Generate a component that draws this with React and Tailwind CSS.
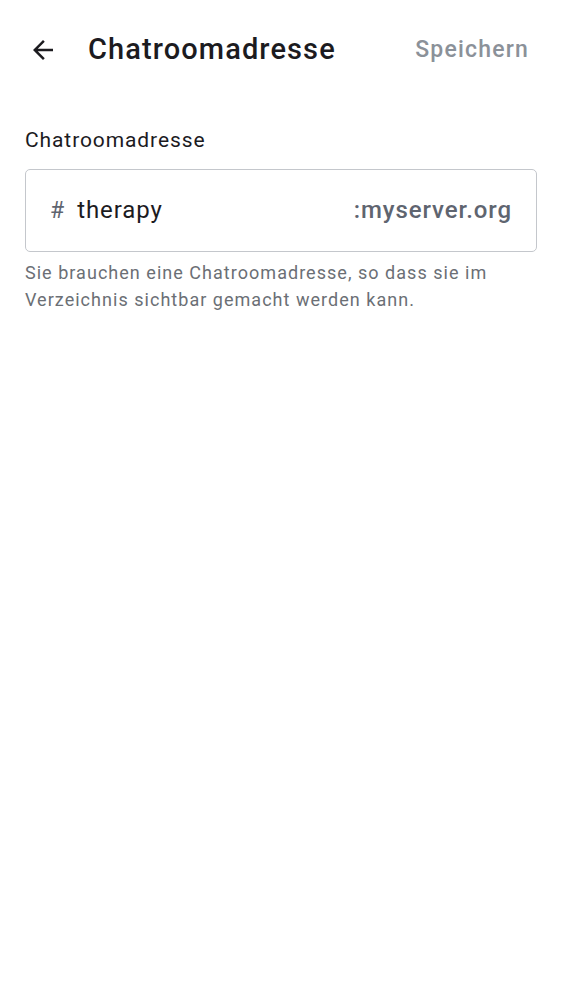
import React from "react";

export default function App() {
  return (
    <div className="w-[562px] h-[1000px] bg-white" style={{ fontFamily: "Roboto, 'Noto Sans', sans-serif" }}>
      <div className="h-[100px] flex items-center pl-[28px] pr-[33px]">
        <svg width="30" height="30" viewBox="0 0 24 24" className="text-[#1c1b1f]">
          <path d="M20 11H7.83l5.59-5.59L12 4l-8 8 8 8 1.41-1.41L7.83 13H20v-2z" fill="currentColor" />
        </svg>
        <div className="ml-[30px] text-[29px] font-medium text-[#1c1b1f] tracking-[1.1px] flex-1">Chatroomadresse</div>
        <div className="text-[23px] font-medium text-[#8b9199] tracking-[1.2px]">Speichern</div>
      </div>
      <div className="px-[25px] pt-[27px]">
        <div className="text-[21px] text-[#1c1b1f] tracking-[0.9px] leading-[26px]">Chatroomadresse</div>
        <div className="mt-[16px] h-[83px] border border-[#c4c7cc] rounded-[5px] flex items-center pl-[24px] pr-[24px]">
          <div className="flex items-baseline w-full leading-[30px]">
            <span className="text-[23px] text-[#5f6570]">#</span>
            <span className="ml-[13px] text-[24px] text-[#1c1b1f] tracking-[0.9px] flex-1">therapy</span>
            <span className="text-[24px] font-medium text-[#5f6570] tracking-[0.9px]">:myserver.org</span>
          </div>
        </div>
        <div className="mt-[7px] text-[18px] leading-[27px] text-[#6b6f75] tracking-[1.03px]">
          Sie brauchen eine Chatroomadresse, so dass sie im<br />Verzeichnis sichtbar gemacht werden kann.
        </div>
      </div>
    </div>
  );
}
